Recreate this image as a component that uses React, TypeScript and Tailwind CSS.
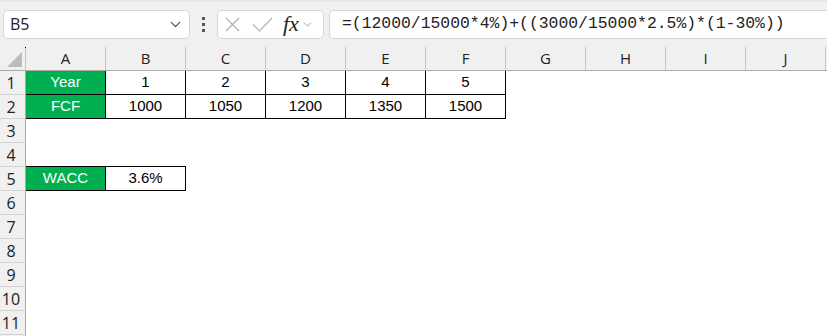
import { ChevronDown } from 'lucide-react';

const cols = ['A', 'B', 'C', 'D', 'E', 'F', 'G', 'H', 'I', 'J'];

interface Cell {
  text?: string;
  green?: boolean;
  box?: boolean;
  boxBottom?: boolean;
}

// rows 1..11, only the filled cells are listed
const sheet: Record<number, Cell[]> = {
  1: [
    { text: 'Year', green: true, box: true },
    { text: '1', box: true },
    { text: '2', box: true },
    { text: '3', box: true },
    { text: '4', box: true },
    { text: '5', box: true },
  ],
  2: [
    { text: 'FCF', green: true, box: true },
    { text: '1000', box: true },
    { text: '1050', box: true },
    { text: '1200', box: true },
    { text: '1350', box: true },
    { text: '1500', box: true },
  ],
  4: [{ boxBottom: true }, { boxBottom: true }],
  5: [
    { text: 'WACC', green: true, box: true },
    { text: '3.6%', box: true },
  ],
};

const uiFont = { fontFamily: '"Open Sans", "Noto Sans", sans-serif' };

function FormulaBar() {
  return (
    <div className="flex items-center h-[47px] bg-[#f0f0f0] border-t-2 border-[#e6e6e6] pl-[3px] pb-[1px]">
      <div className="flex items-center w-[187px] h-[29px] bg-white border border-[#d6d6d6] rounded-[5px] pl-[6px] pr-[5px]">
        <span className="flex-1 text-[16px] text-[#222]" style={uiFont}>B5</span>
        <ChevronDown size={17} strokeWidth={1.5} className="text-[#444]" />
      </div>
      <div className="flex flex-col gap-[3px] ml-[12px] mr-[12px]">
        <span className="w-[3px] h-[3px] bg-[#555]" />
        <span className="w-[3px] h-[3px] bg-[#555]" />
        <span className="w-[3px] h-[3px] bg-[#555]" />
      </div>
      <div className="flex items-center w-[107px] h-[29px] bg-white border border-[#d6d6d6] rounded-[5px] pl-[7px]">
        <svg width="15" height="15" viewBox="0 0 15 15">
          <path d="M1 1 L14 14 M14 1 L1 14" stroke="#b0b0b0" strokeWidth="1.2" fill="none" />
        </svg>
        <svg width="21" height="15" viewBox="0 0 21 15" className="ml-[12px]">
          <path d="M1 7.5 L7.5 14 L20 1" stroke="#b0b0b0" strokeWidth="1.2" fill="none" />
        </svg>
        <span
          className="ml-[10px] text-[22px] italic leading-none text-[#222]"
          style={{ fontFamily: '"Liberation Serif", serif' }}
        >
          fx
        </span>
        <ChevronDown size={13} strokeWidth={1.5} className="text-[#888] ml-[2px]" />
      </div>
      <div className="flex items-center flex-1 h-[29px] ml-[5px] bg-white border border-r-0 border-[#d6d6d6] rounded-l-[5px] pl-[12px]">
        <span className="text-[16.4px] text-[#222]" style={{ fontFamily: '"Liberation Mono", monospace' }}>
          =(12000/15000*4%)+((3000/15000*2.5%)*(1-30%))
        </span>
      </div>
    </div>
  );
}

function HeaderRow() {
  return (
    <div className="flex h-[24px] bg-[#f0f0f0] border-b border-[#ababab]" style={uiFont}>
      <div className="relative w-[26px] border-r border-[#c6c6c6]">
        <span className="absolute left-[25px] top-0 w-[1px] h-[1px] bg-black" />
        <svg className="absolute right-[3px] bottom-[3px]" width="15" height="15" viewBox="0 0 15 15">
          <polygon points="15,0 15,15 0,15" fill="#bcbcbc" />
        </svg>
      </div>
      {cols.map((c) => (
        <div
          key={c}
          className="w-[80px] shrink-0 flex items-center justify-center border-r border-[#c6c6c6] text-[15px] text-[#222]"
        >
          {c}
        </div>
      ))}
    </div>
  );
}

function Row({ n, label }: { n: number; label: boolean }) {
  const cells = sheet[n] ?? [];
  return (
    <div className="flex h-[24px]">
      <div
        className="w-[26px] shrink-0 flex items-center justify-center bg-[#f0f0f0] border-r border-b border-r-[#ababab] border-b-[#d4d4d4] text-[16px] text-[#222] pr-[3px]"
        style={uiFont}
      >
        {label ? n : ''}
      </div>
      {cols.map((c, i) => {
        const cell = cells[i];
        const green = cell?.green;
        let cls = 'w-[80px] shrink-0 flex items-center justify-center text-[15px] ';
        if (cell?.box) cls += 'border-r border-b border-black ';
        else if (cell?.boxBottom) cls += 'border-b border-black ';
        cls += green ? 'bg-[#00b050] text-white' : 'bg-white text-black';
        return (
          <div key={c} className={cls} style={{ fontFamily: '"Liberation Sans", Arial, sans-serif' }}>
            {cell?.text}
          </div>
        );
      })}
    </div>
  );
}

export default function App() {
  return (
    <div className="w-[827px] h-[336px] overflow-hidden bg-white">
      <FormulaBar />
      <HeaderRow />
      {Array.from({ length: 12 }, (_, i) => (
        <Row key={i} n={i + 1} label={i < 11} />
      ))}
    </div>
  );
}
